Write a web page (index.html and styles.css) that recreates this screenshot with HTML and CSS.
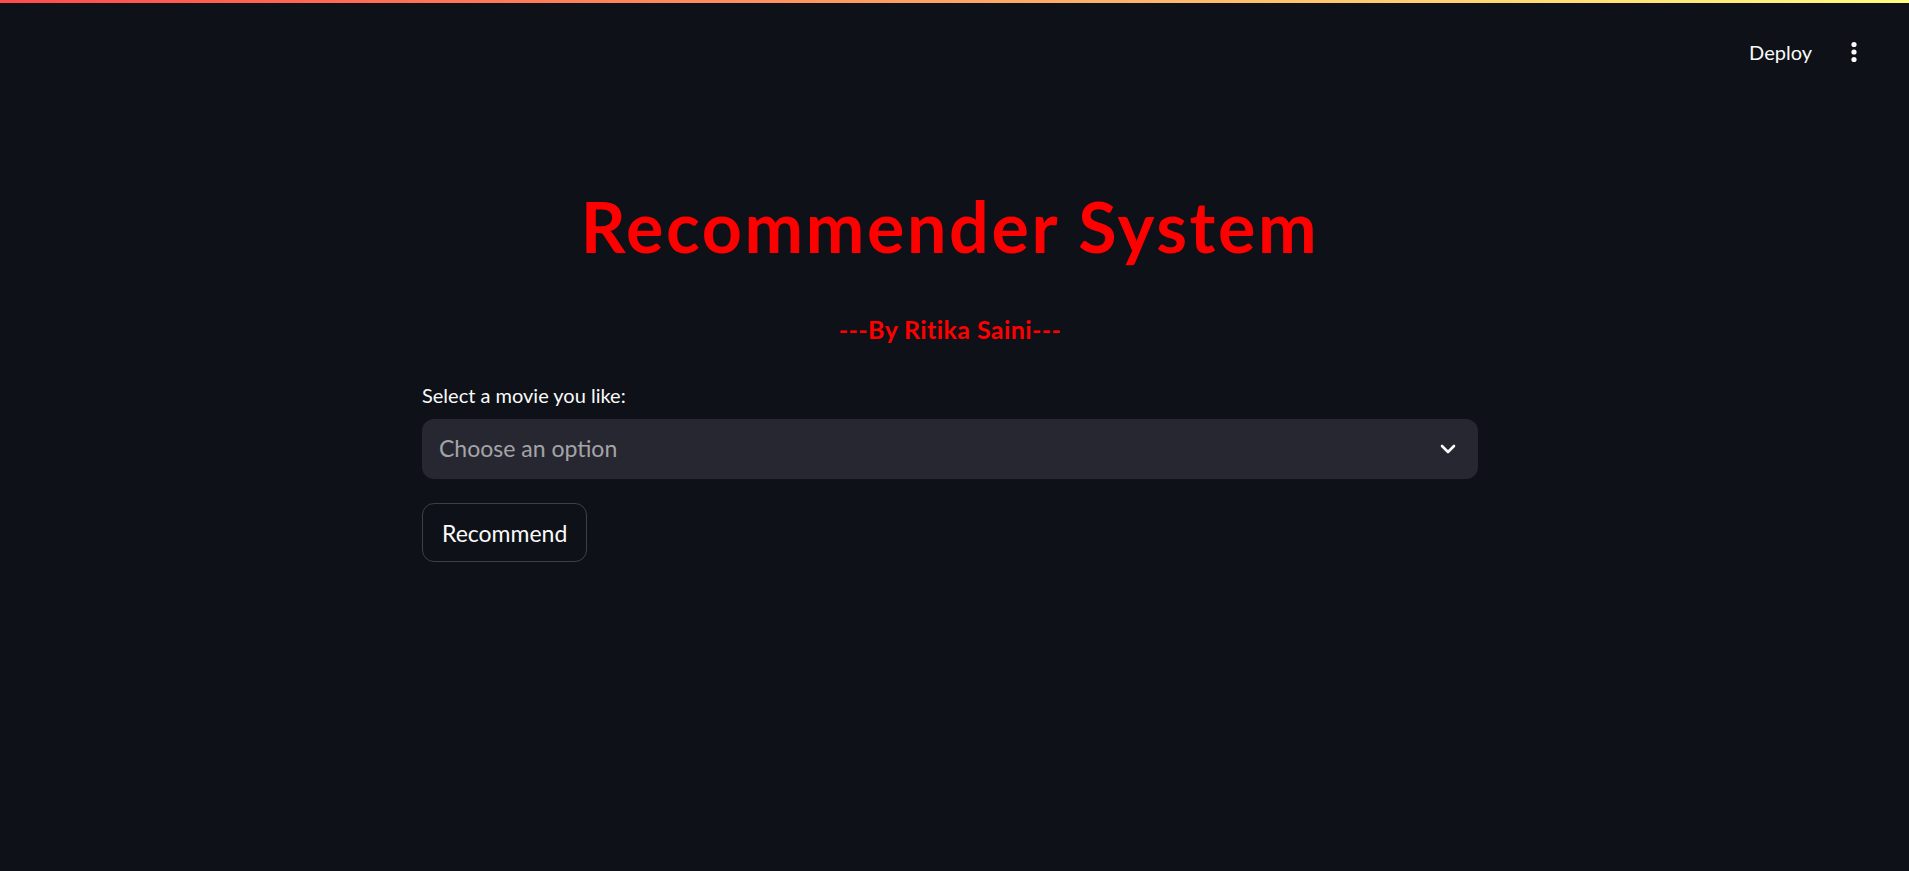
FILE: index.html
```html
<!DOCTYPE html>
<html lang="en">
<head>
<meta charset="utf-8">
<title>Recommender System</title>
<link rel="stylesheet" href="styles.css">
</head>
<body>
<div class="decoration"></div>
<header class="topbar">
  <span class="deploy">Deploy</span>
  <button class="menu" aria-label="Main menu">
    <svg width="8" height="24" viewBox="0 0 8 24"><circle cx="4" cy="4.5" r="2.6" fill="#fafafa"/><circle cx="4" cy="12" r="2.6" fill="#fafafa"/><circle cx="4" cy="19.5" r="2.6" fill="#fafafa"/></svg>
  </button>
</header>
<main class="main">
  <div class="block">
    <h1 class="title">Recommender System</h1>
    <h3 class="subtitle">---By Ritika Saini---</h3>
    <label class="label">Select a movie you like:</label>
    <div class="select">
      <span class="placeholder">Choose an option</span>
      <svg class="chevron" width="16" height="10" viewBox="0 0 16 10"><path d="M2 2 L8 8 L14 2" fill="none" stroke="#fafafa" stroke-width="2.6" stroke-linecap="round" stroke-linejoin="round"/></svg>
    </div>
    <div class="btnrow"><button class="btn">Recommend</button></div>
  </div>
</main>
</body>
</html>
```
FILE: styles.css
```css
html, body {
  margin: 0;
  padding: 0;
  background: #0e1117;
  color: #fafafa;
  font-family: Lato, "Noto Sans", sans-serif;
  height: 100%;
  overflow: hidden;
}
.decoration {
  height: 3px;
  background: linear-gradient(90deg, #ff4b4b, #fffd80);
}
.topbar {
  height: 98px;
  display: flex;
  align-items: center;
  justify-content: flex-end;
  padding-right: 51px;
  gap: 38px;
}
.deploy {
  font-size: 20px;
  color: #fafafa;
}
.menu {
  background: none;
  border: 0;
  padding: 0;
  display: flex;
}
.main {
  display: flex;
  justify-content: center;
  padding-right: 9px;
}
.block {
  width: 1056px;
  display: flex;
  flex-direction: column;
}
.title {
  margin: 0;
  padding-top: 82px;
  text-align: center;
  color: #ff0000;
  font-size: 70px;
  line-height: 86px;
  letter-spacing: 2.6px;
  font-weight: 700;
}
.subtitle {
  margin: 0;
  padding-top: 42px;
  text-align: center;
  color: #ff0000;
  font-size: 25px;
  line-height: 36px;
  letter-spacing: 0.4px;
  font-weight: 700;
}
.label {
  font-size: 20px;
  line-height: 32px;
  margin-top: 32px;
  margin-bottom: 8px;
}
.select {
  height: 60px;
  background: #262730;
  border-radius: 12px;
  display: flex;
  align-items: center;
  justify-content: space-between;
  padding: 0 17px 0 17px;
}
.placeholder {
  font-size: 23px;
  color: rgba(250, 250, 250, 0.6);
  position: relative;
  top: -1px;
}
.chevron {
  margin-right: 5px;
}
.btnrow {
  margin-top: 24px;
  display: flex;
}
.btn {
  height: 59px;
  padding: 0 19px;
  background: transparent;
  border: 1px solid rgba(250, 250, 250, 0.2);
  border-radius: 12px;
  color: #fafafa;
  font-family: inherit;
  font-size: 23px;
}
```
